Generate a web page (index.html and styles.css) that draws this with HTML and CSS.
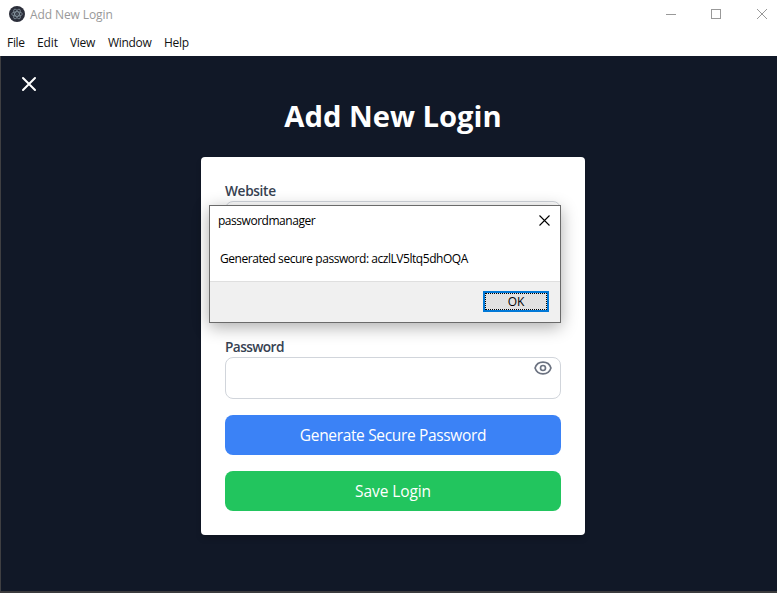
FILE: index.html
```html
<!DOCTYPE html>
<html lang="en">
<head>
<meta charset="utf-8">
<title>Add New Login</title>
<link rel="stylesheet" href="styles.css">
</head>
<body>
<div class="window">
  <header class="titlebar">
    <svg class="app-icon" width="16" height="16" viewBox="0 0 16 16">
      <circle cx="8" cy="8" r="8" fill="#2b2e3a"/>
      <g fill="none" stroke="#b4c8d2" stroke-opacity=".7" stroke-width=".7">
        <ellipse cx="8" cy="8" rx="5.4" ry="2.2"/>
        <ellipse cx="8" cy="8" rx="5.4" ry="2.2" transform="rotate(60 8 8)"/>
        <ellipse cx="8" cy="8" rx="5.4" ry="2.2" transform="rotate(120 8 8)"/>
      </g>
      <circle cx="8" cy="8" r=".5" fill="#b4c8d2"/>
    </svg>
    <span class="caption"><span class="t-caption">Add New Login</span></span>
    <svg class="controls" width="103" height="12" viewBox="0 0 103 12" fill="none" stroke="#999">
      <path d="M0 5.5h10M45.5.5h9v9h-9z" shape-rendering="crispEdges"/>
      <path d="M91 0l10 10M101 0L91 10"/>
    </svg>
  </header>
  <nav class="menu">
    <span class="m-file">File</span><span class="m-edit">Edit</span><span class="m-view">View</span><span class="m-window">Window</span><span class="m-help">Help</span>
  </nav>
  <main class="page">
    <svg class="back" width="16" height="16" viewBox="0 0 16 16" stroke="#fff" stroke-width="2" stroke-linecap="round"><path d="M2 2l12 12M14 2L2 14"/></svg>
    <h1><span class="t-heading">Add New Login</span></h1>
    <form class="card">
      <div class="field"><label><span class="t-website">Website</span></label><div class="input"></div></div>
      <div class="field"><label></label><div class="input"></div></div>
      <div class="field"><label><span class="t-password">Password</span></label>
        <div class="input">
          <svg class="eye" width="20" height="20" viewBox="0 0 24 24" fill="none" stroke="#6b7280" stroke-width="2" stroke-linecap="round" stroke-linejoin="round"><path d="M15 12a3 3 0 1 1-6 0 3 3 0 0 1 6 0z"/><path d="M2.458 12C3.732 7.943 7.523 5 12 5s8.268 2.943 9.542 7c-1.274 4.057-5.064 7-9.542 7S3.732 16.057 2.458 12z"/></svg>
        </div>
      </div>
      <button type="button" class="btn generate"><span class="t-generate">Generate Secure Password</span></button>
      <button type="button" class="btn save"><span class="t-save">Save Login</span></button>
    </form>
  </main>
  <section class="dialog" role="dialog">
    <div class="dialog-head"><span class="t-app">passwordmanager</span>
      <svg width="11" height="11" viewBox="0 0 11 11" stroke="#000" stroke-width="1.1"><path d="M.5.5l10 10M10.500.5l-10 10"/></svg>
    </div>
    <p><span class="t-message">Generated secure password: aczlLV5ltq5dhOQA</span></p>
    <footer><button type="button" class="ok"><span>OK</span></button></footer>
  </section>
</div>
</body>
</html>
```
FILE: styles.css
```css
* { box-sizing: border-box; }
body { margin: 0; font-family: "Open Sans", "Noto Sans", sans-serif; overflow: hidden; }
.window { position: relative; display: flex; flex-direction: column; width: 777px; height: 593px; background: #fff; }
span { white-space: nowrap; }
.titlebar { display: flex; align-items: center; height: 29px; padding-left: 9px; font-size: 12px; color: #999; }
.app-icon { margin-top: -1px; }
.caption { flex: 1; margin-left: 5px; }
.controls { width: 103px; margin-right: 8px; margin-top: 1px; }
.menu { display: flex; height: 27px; padding-left: 7px; font-size: 12px; line-height: 27px; color: #111; letter-spacing: -.3px; }
.m-file { width: 30px; }
.m-edit { width: 33px; letter-spacing: -.1px; }
.m-view { width: 38px; }
.m-window { width: 56px; }
.page { flex: 1; background: #111827; border-left: 1px solid #3f3f42; border-bottom: 2px solid #3b3b3d; padding: 20px 0 0 20px; }
.back { display: block; }
h1 { width: 384px; margin: 6px 0 0 180px; text-align: center; color: #fff; font-size: 29.2px; line-height: 36px; font-weight: 700; }
.card { display: flex; flex-direction: column; gap: 16px; width: 384px; height: 378px; margin: 23px 0 0 180px; padding: 24px; background: #fff; border-radius: 4px; box-shadow: 0 4px 6px -1px rgba(0,0,0,.2); }
.field label { display: block; height: 20px; font-size: 13.7px; line-height: 20px; font-weight: 600; color: #374151; }
.input { display: flex; justify-content: flex-end; height: 42px; border: 1px solid #d1d5db; border-radius: 8px; padding: 0 7px; }
.eye { display: block; }
.btn { height: 40px; border: 0; border-radius: 8px; padding: 0; color: #fff; font: 15.5px/40px "Open Sans", sans-serif; }
.generate { background: #3b82f6; }
.save { background: #22c55e; }
.dialog { position: absolute; left: 209px; top: 205px; width: 352px; height: 118px; display: flex; flex-direction: column; background: #fff; border: 1px solid #6a6a6a; box-shadow: 0 4px 16px rgba(0,0,0,.33); color: #000; font-size: 12px; }
.dialog-head { display: flex; justify-content: space-between; align-items: center; height: 29px; padding: 0 10px 0 8px; }
.dialog p { height: 46px; margin: 0; padding: 15px 0 0 10px; line-height: 18px; }
.dialog footer { flex: 1; display: flex; justify-content: flex-end; align-items: flex-start; background: #f0f0f0; border-top: 1px solid #dfdfdf; padding: 9px 11px 0 0; }
.ok { width: 66px; height: 21px; padding: 0; border: 2px solid #0078d7; background: #e1e1e1; outline: 1px dotted #000; outline-offset: -3px; font: 12px/17px "Open Sans", sans-serif; color: #000; }
.t-caption { letter-spacing: -.1px; }
.t-website { letter-spacing: -.35px; }
.t-password { letter-spacing: -.6px; }
.t-app { letter-spacing: -.47px; }
.t-message { letter-spacing: -.45px; }
.t-generate { letter-spacing: -.34px; }
.t-save { letter-spacing: -.1px; }
```
